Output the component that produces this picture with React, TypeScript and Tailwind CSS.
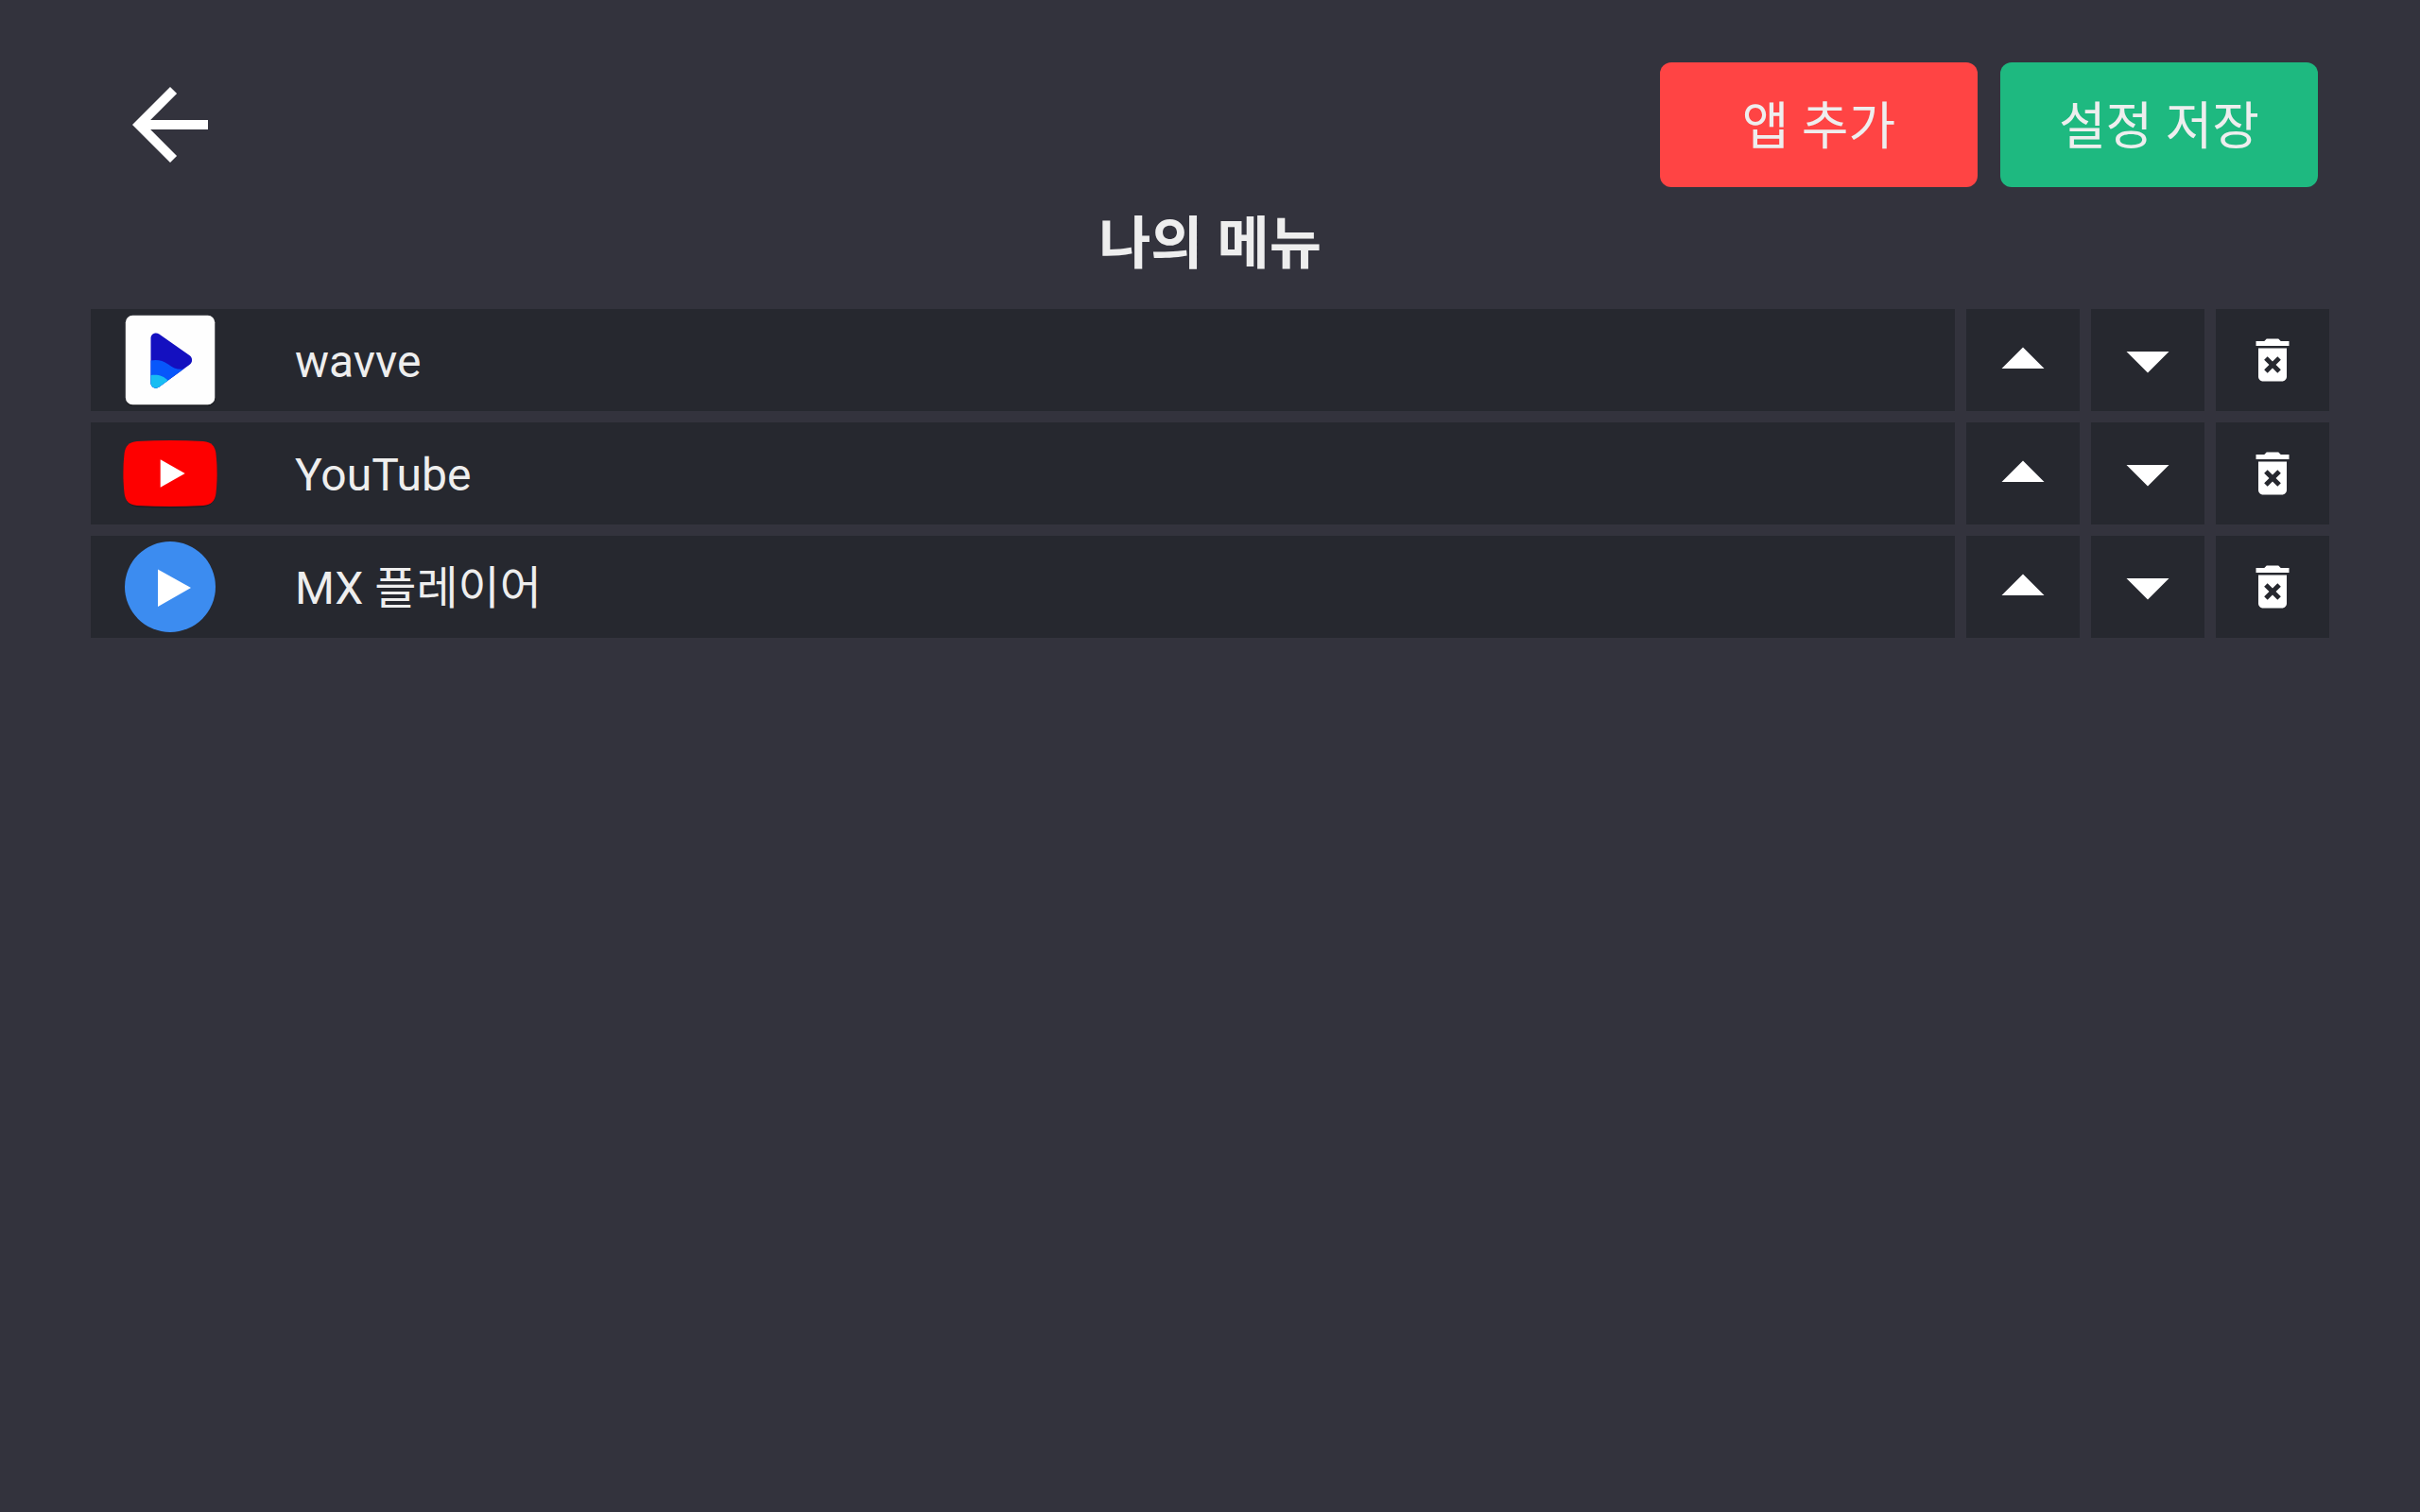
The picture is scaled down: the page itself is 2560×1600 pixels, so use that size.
import React, { useState } from "react";

interface MenuApp {
  id: string;
  name: string;
  icon: React.ReactNode;
}

const WavveIcon: React.FC = () => (
  <svg viewBox="0 0 96 96" className="h-24 w-24 overflow-visible" aria-hidden="true">
    <defs>
      <clipPath id="wavve-play">
        <path d="M27.5 25c0-4.500 5-7 8.800-4.400L68.400 43c3.600 2.600 3.600 7.400 0 10L36.300 76.600c-3.800 2.600-8.800 0-8.800-4.400z" />
      </clipPath>
    </defs>
    <rect x="1" y="2.200" width="94.500" height="94.500" rx="7.500" fill="#1b1d22" />
    <rect x="0.800" y="0.800" width="94.500" height="94.500" rx="7.500" fill="#fefefe" />
    <g clipPath="url(#wavve-play)">
      <rect x="24" y="16" width="52" height="66" fill="#1410c0" />
      <path d="M24 49c9-2 15-1.500 22 3.500 6 4.500 11 6.500 20 4.500v25H24z" fill="#0757fb" />
      <path d="M24 65c8-2.500 16-1.500 22 5v13H24z" fill="#18bdf3" />
    </g>
  </svg>
);

const YouTubeIcon: React.FC = () => (
  <svg viewBox="0 0 96 96" className="h-24 w-24 overflow-visible" aria-hidden="true">
    <path
      d="M13 15.500Q48 12.500 83 15.500C92 16.500 95.500 20 96.500 28Q98.800 49 96.500 69C95.500 77 92 82 83 83.500Q48 85.500 13 83.500C4 82 .500 77-.500 69Q-2.800 49-.500 28C.500 20 4 16.500 13 15.500z"
      fill="#1b1d22"
    />
    <path
      d="M13 14Q48 12 83 14C91.500 14.800 95.500 19 96.500 27Q98.800 48 96.500 69C95.500 77 91.500 81.200 83 82Q48 84 13 82C4.500 81.200.500 77-.500 69Q-2.800 48-.500 27C.500 19 4.500 14.800 13 14z"
      fill="#fe0000"
    />
    <path d="M37.700 33.300L63.700 48 37.700 62.700z" fill="#fff" />
  </svg>
);

const MxPlayerIcon: React.FC = () => (
  <svg viewBox="0 0 96 96" className="h-24 w-24" aria-hidden="true">
    <circle cx="48" cy="48" r="48" fill="#3c8cf0" />
    <path d="M35 29.500L70 49 35 69z" fill="#fff" />
  </svg>
);

const initialApps: MenuApp[] = [
  { id: "wavve", name: "wavve", icon: <WavveIcon /> },
  { id: "youtube", name: "YouTube", icon: <YouTubeIcon /> },
  { id: "mx", name: "MX 플레이어", icon: <MxPlayerIcon /> },
];

interface RowButtonProps {
  label: string;
  onClick: () => void;
  children: React.ReactNode;
}

const RowButton: React.FC<RowButtonProps> = ({ label, onClick, children }) => (
  <button
    type="button"
    aria-label={label}
    onClick={onClick}
    className="flex w-[120px] shrink-0 items-center justify-center bg-[#26282f] text-white"
  >
    {children}
  </button>
);

const App: React.FC = () => {
  const [apps, setApps] = useState<MenuApp[]>(initialApps);

  const moveApp = (index: number, step: number) => {
    const target = index + step;
    if (target < 0 || target >= apps.length) return;
    const next = [...apps];
    [next[index], next[target]] = [next[target], next[index]];
    setApps(next);
  };

  const removeApp = (id: string) => {
    setApps(apps.filter((app) => app.id !== id));
  };

  return (
    <div className="min-h-screen bg-[#33333d] px-24 pt-[66px] font-[Roboto,'Noto_Sans_CJK_KR',sans-serif] text-[#eeeeee]">
      <header className="flex items-center justify-between pr-3 pl-6">
        <button type="button" aria-label="뒤로" className="text-white">
          <svg viewBox="0 0 24 24" className="h-[120px] w-[120px]" fill="currentColor">
            <path d="M20 11H7.830l5.590-5.590L12 4l-8 8 8 8 1.410-1.410L7.830 13H20v-2z" />
          </svg>
        </button>
        <div className="flex gap-6">
          <button
            type="button"
            className="h-[132px] w-[336px] rounded-xl bg-[#ff4444] pt-1 text-[54px]"
          >
            앱 추가
          </button>
          <button
            type="button"
            className="h-[132px] w-[336px] rounded-xl bg-[#1eb980] pt-1 text-[54px]"
          >
            설정 저장
          </button>
        </div>
      </header>

      <h1 className="pb-2 text-center text-[60px] leading-[121px] font-bold">
        나의 메뉴
      </h1>

      <ul className="flex flex-col gap-3">
        {apps.map((app, index) => (
          <li key={app.id} className="flex h-[108px] gap-3">
            <div className="flex flex-1 items-center gap-[84px] bg-[#26282f] pl-9">
              {app.icon}
              <span className="pt-1 text-[48px] leading-[60px]">{app.name}</span>
            </div>
            <RowButton label={`${app.name} 위로`} onClick={() => moveApp(index, -1)}>
              <svg viewBox="0 0 24 24" className="h-[108px] w-[108px]" fill="currentColor">
                <path d="M7 14l5-5 5 5z" />
              </svg>
            </RowButton>
            <RowButton label={`${app.name} 아래로`} onClick={() => moveApp(index, 1)}>
              <svg viewBox="0 0 24 24" className="h-[108px] w-[108px]" fill="currentColor">
                <path d="M7 10l5 5 5-5z" />
              </svg>
            </RowButton>
            <RowButton label={`${app.name} 삭제`} onClick={() => removeApp(app.id)}>
              <svg viewBox="0 0 24 24" className="h-[60px] w-[60px]" fill="currentColor">
                <path d="M6 19c0 1.100.900 2 2 2h8c1.100 0 2-.900 2-2V7H6v12zm2.460-7.120l1.410-1.410L12 12.590l2.120-2.120 1.410 1.410L13.410 14l2.120 2.120-1.410 1.410L12 15.410l-2.120 2.120-1.410-1.410L10.590 14l-2.130-2.120zM15.500 4l-1-1h-5l-1 1H5v2h14V4z" />
              </svg>
            </RowButton>
          </li>
        ))}
      </ul>
    </div>
  );
};

export default App;
